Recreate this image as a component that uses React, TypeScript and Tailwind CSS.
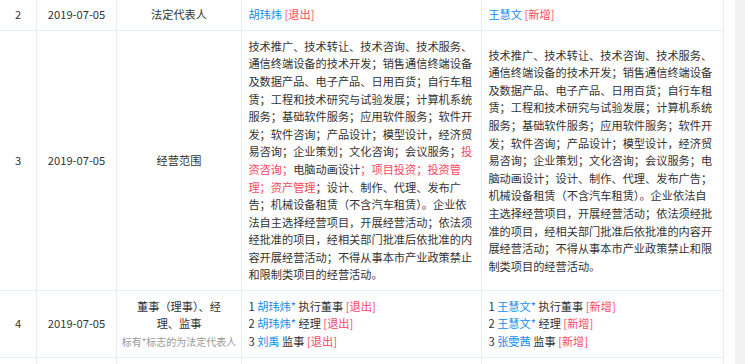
const BLUE = "text-[#128bed]";
const RED = "text-[#fd485e]";

const cell = "border-r border-b border-[#e4eef6] p-[6.4px] flex items-center";
const center = `${cell} justify-center text-center`;

function Name({ children }: { children: React.ReactNode }) {
  return <span className={BLUE}>{children}</span>;
}

function Tag({ children }: { children: React.ReactNode }) {
  return <span className={RED}>{children}</span>;
}

const SCOPE_A =
  "技术推广、技术转让、技术咨询、技术服务、通信终端设备的技术开发；销售通信终端设备及数据产品、电子产品、日用百货；自行车租赁；工程和技术研究与试验发展；计算机系统服务；基础软件服务；应用软件服务；软件开发；软件咨询；产品设计；模型设计，经济贸易咨询；企业策划；文化咨询；会议服务；";
const SCOPE_B =
  "；设计、制作、代理、发布广告；机械设备租赁（不含汽车租赁）。企业依法自主选择经营项目，开展经营活动；依法须经批准的项目，经相关部门批准后依批准的内容开展经营活动；不得从事本市产业政策禁止和限制类项目的经营活动。";
const SCOPE_NEW =
  "技术推广、技术转让、技术咨询、技术服务、通信终端设备的技术开发；销售通信终端设备及数据产品、电子产品、日用百货；自行车租赁；工程和技术研究与试验发展；计算机系统服务；基础软件服务；应用软件服务；软件开发；软件咨询；产品设计；模型设计，经济贸易咨询；企业策划；文化咨询；会议服务；电脑动画设计；设计、制作、代理、发布广告；机械设备租赁（不含汽车租赁）。企业依法自主选择经营项目，开展经营活动；依法须经批准的项目，经相关部门批准后依批准的内容开展经营活动；不得从事本市产业政策禁止和限制类项目的经营活动。";

const OLD_STAFF = [
  { name: "胡玮炜", star: true, role: "执行董事" },
  { name: "胡玮炜", star: true, role: "经理" },
  { name: "刘禹", star: false, role: "监事" },
];

const NEW_STAFF = [
  { name: "王慧文", star: true, role: "执行董事" },
  { name: "王慧文", star: true, role: "经理" },
  { name: "张雯茜", star: false, role: "监事" },
];

function Staff({ rows, tag }: { rows: typeof OLD_STAFF; tag: string }) {
  return (
    <div>
      {rows.map((r, i) => (
        <div key={i}>
          {i + 1} <Name>{r.name}{r.star ? "*" : ""}</Name> {r.role} <Tag>[{tag}]</Tag>
        </div>
      ))}
    </div>
  );
}

export default function App() {
  return (
    <div
      className="flex h-[364px] w-[745px] overflow-hidden bg-white text-[11.2px] leading-[17.6px] text-[#333]"
      style={{ fontFamily: '"Noto Sans CJK SC", sans-serif' }}
    >
      <div className="grid w-[724px] shrink-0 grid-cols-[37px_80px_125px_240px_242px] content-start">
        {/* 法定代表人 */}
        <div className={center}>2</div>
        <div className={center}>2019-07-05</div>
        <div className={center}>法定代表人</div>
        <div className={cell}>
          <div>
            <Name>胡玮炜</Name> <Tag>[退出]</Tag>
          </div>
        </div>
        <div className={cell}>
          <div>
            <Name>王慧文</Name> <Tag>[新增]</Tag>
          </div>
        </div>

        {/* 经营范围 */}
        <div className={center}>3</div>
        <div className={center}>2019-07-05</div>
        <div className={center}>经营范围</div>
        <div className={cell}>
          <div>
            {SCOPE_A}
            <Tag>投资咨询；</Tag>电脑动画设计<Tag>；项目投资；投资管理；资产管理</Tag>
            {SCOPE_B}
          </div>
        </div>
        <div className={cell}>
          <div>{SCOPE_NEW}</div>
        </div>

        {/* 董事 */}
        <div className={center}>4</div>
        <div className={center}>2019-07-05</div>
        <div className={center}>
          <div>
            <div>
              董事（理事）、经
              <br />
              理、监事
            </div>
            <div className="whitespace-nowrap text-[10px] leading-[17.6px] text-[#999]">
              标有*标志的为法定代表人
            </div>
          </div>
        </div>
        <div className={cell}>
          <Staff rows={OLD_STAFF} tag="退出" />
        </div>
        <div className={cell}>
          <Staff rows={NEW_STAFF} tag="新增" />
        </div>

        <div className={`${center} h-[31px]`} />
        <div className={`${center} h-[31px]`} />
        <div className={`${center} h-[31px]`} />
        <div className={`${cell} h-[31px]`} />
        <div className={`${cell} h-[31px]`} />
      </div>
      <div className="w-[11px] shrink-0" />
      <div className="h-full w-[10px] shrink-0 bg-[#f1f1f1]" />
    </div>
  );
}
